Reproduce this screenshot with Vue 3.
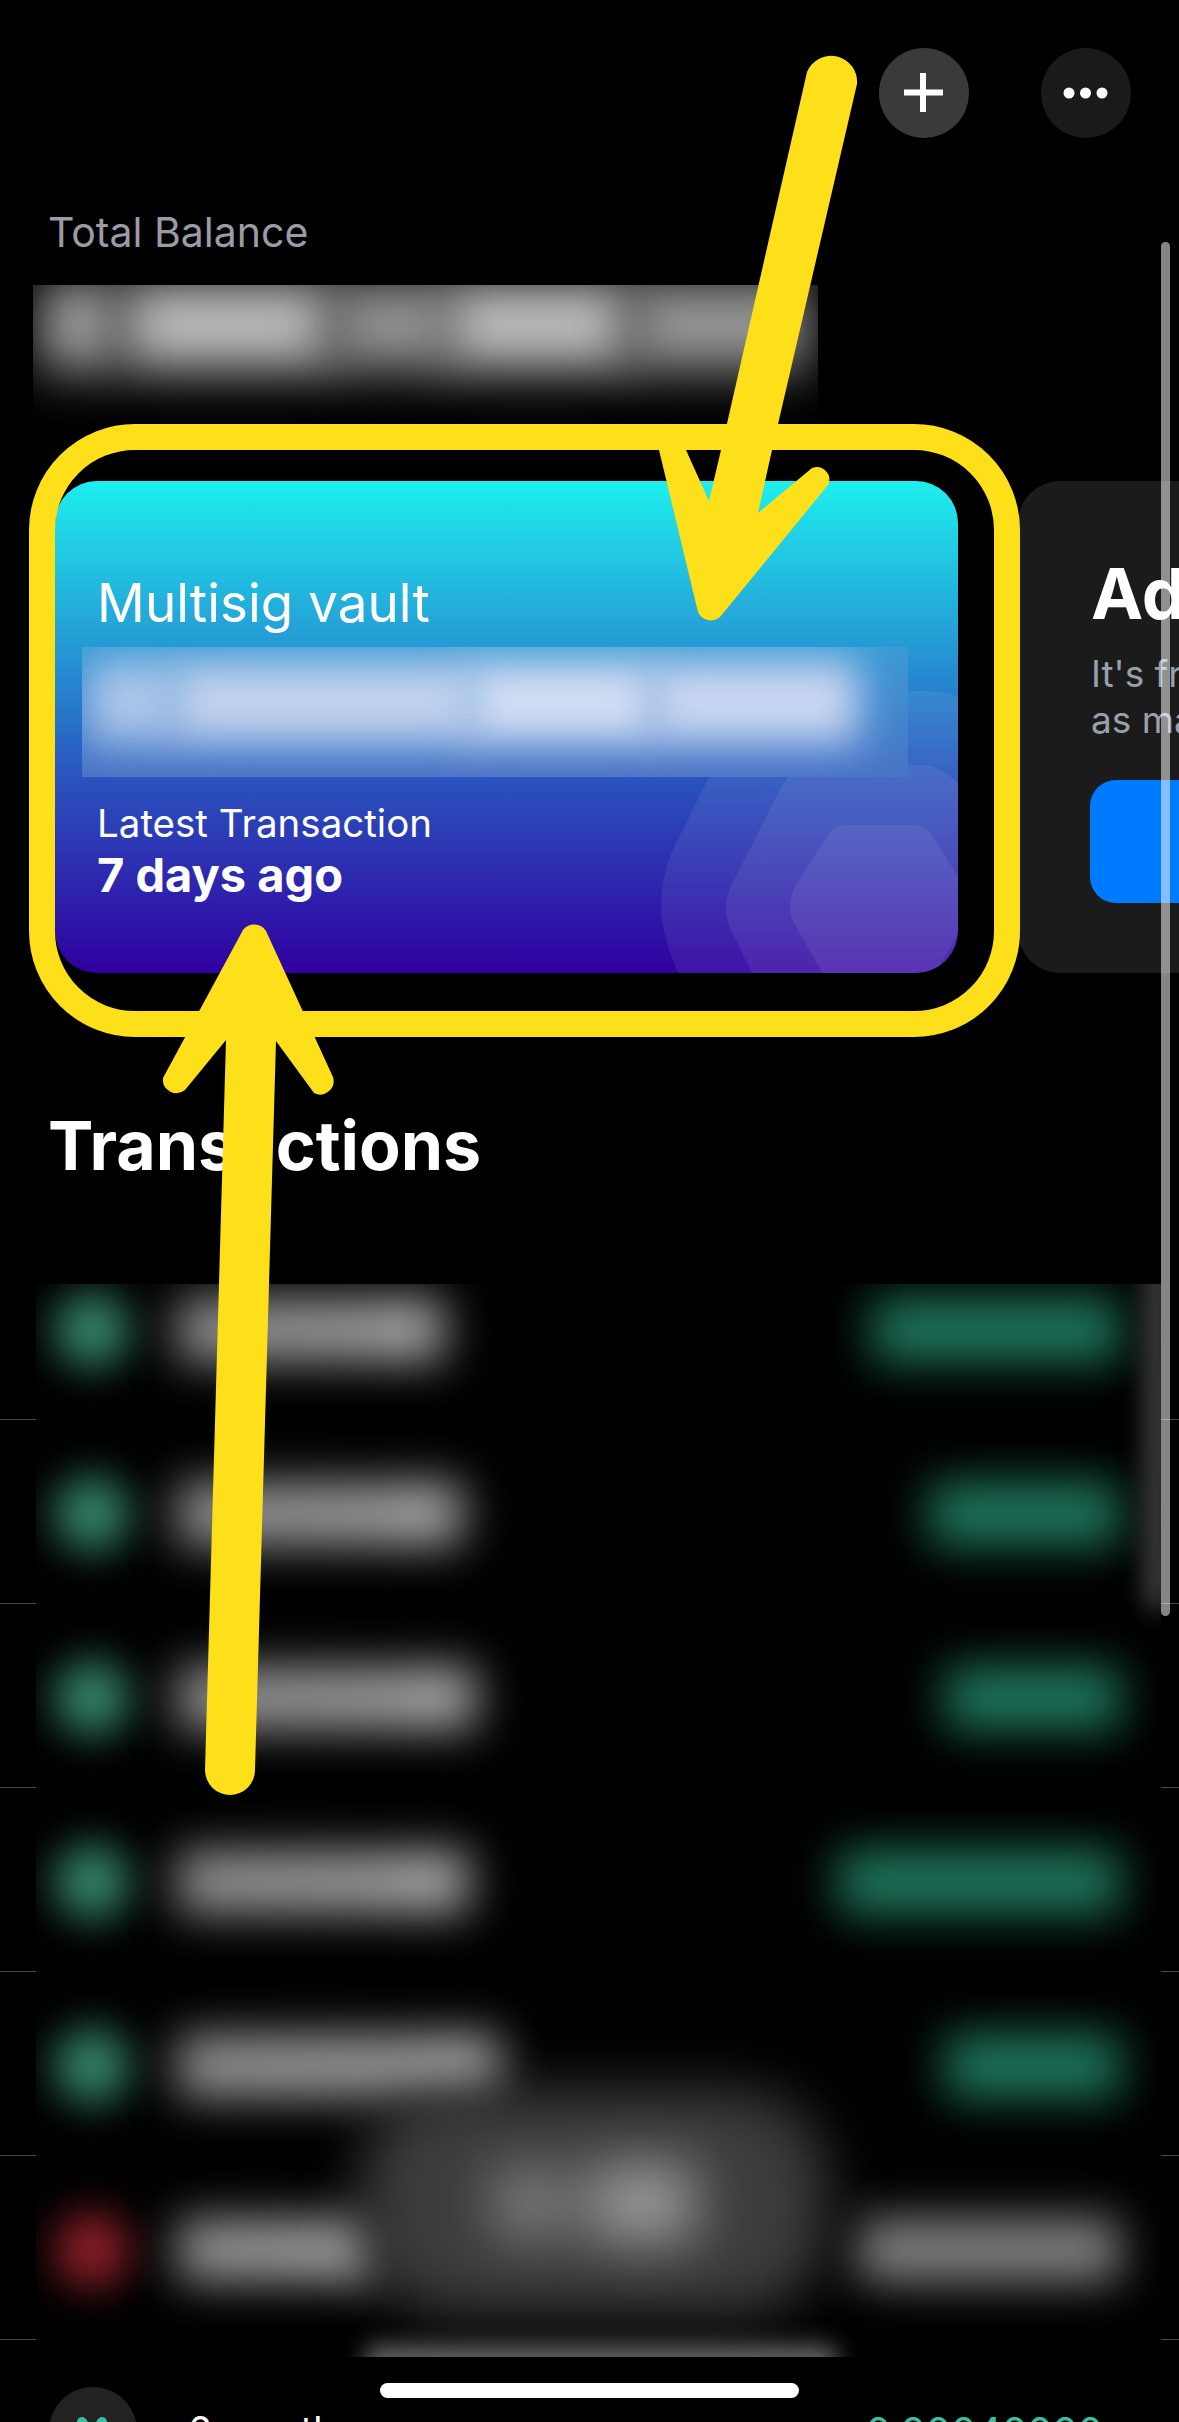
<template>
  <div class="page">
    <!-- top buttons -->
    <header class="topbar">
      <button class="round plus" aria-label="Add">
        <svg width="90" height="90" viewBox="0 0 90 90">
          <path d="M44 25v39M25 44.500h39" stroke="#fff" stroke-width="6" fill="none" />
        </svg>
      </button>
      <button class="round more" aria-label="More">
        <svg width="90" height="90" viewBox="0 0 90 90">
          <circle cx="28" cy="45" r="5.500" fill="#fff" />
          <circle cx="44.500" cy="45" r="5.500" fill="#fff" />
          <circle cx="61" cy="45" r="5.500" fill="#fff" />
        </svg>
      </button>
    </header>

    <div class="total-label">Total Balance</div>
    <div class="total-blur" aria-hidden="true">
      <span v-for="(s, i) in totalLumps" :key="i" class="lump" :style="lumpStyle(s)"></span>
    </div>

    <!-- wallet carousel -->
    <section class="carousel">
      <article class="vault">
        <svg class="hexes" viewBox="55 481 903 492" aria-hidden="true">
          <path d="M775 691L925 691Q945 691 965 700L1000 1000L690 1000Q661 940 661 907Q661 870 680 835L740 715Q752 691 775 691Z" />
          <path d="M812 765L925 765Q945 768 965 790L1000 1000L760 990L731 930Q720 908 732 884L780 790Q792 765 812 765Z" />
          <path d="M850 825L915 825Q928 825 938 845L968 893Q975 905 968 918L925 990L832 990L795 925Q785 907 795 887L826 838Q832 825 850 825Z" />
        </svg>
        <div class="vault-name">Multisig vault</div>
        <div class="vault-blur" aria-hidden="true">
          <span v-for="(s, i) in vaultLumps" :key="i" class="lump soft" :style="lumpStyle(s)"></span>
        </div>
        <div class="vault-latest">Latest Transaction</div>
        <div class="vault-when">7 days ago</div>
      </article>

      <article class="add-card">
        <div class="add-title">Add a wallet</div>
        <div class="add-desc">It's free and you can create<br />as many as you like.</div>
        <div class="add-btn"></div>
      </article>
    </section>

    <h2 class="tx-title">Transactions</h2>

    <!-- blurred list, the separators only show outside of the patch -->
    <section class="tx-wrap">
      <div class="tx-patch" aria-hidden="true">
        <div class="tx-rows">
          <div v-for="(r, i) in rows" :key="i" class="tx-row">
            <span class="tx-dot" :class="r.kind"></span>
            <span class="tx-text" :style="{ width: r.text + 'px' }"></span>
            <span class="tx-amount" :class="r.kind" :style="{ width: r.amount + 'px' }"></span>
          </div>
        </div>
        <div class="toast">
          <span class="toast-a"></span>
          <span class="toast-b"></span>
        </div>
        <div class="toast-edge"></div>
        <div class="bar-ghost"></div>
      </div>
    </section>

    <div class="last-row">
      <div class="last-icon">
        <svg width="88" height="88" viewBox="0 0 88 88">
          <path d="M33 35l10 16 10-16" stroke="#37c0a1" stroke-width="10" stroke-linecap="round" stroke-linejoin="round" fill="none" />
        </svg>
      </div>
      <div class="last-when">6 months ago</div>
      <div class="last-amount">0.00040000</div>
    </div>

    <div class="scrollbar"></div>
    <div class="home-bar"></div>

    <!-- yellow annotation drawn on top of the screenshot -->
    <svg class="marks" width="1179" height="2422" viewBox="0 0 1179 2422" aria-hidden="true">
      <rect x="42" y="437" width="965" height="587" rx="93" fill="none" stroke="#fde01a" stroke-width="26" />
      <path fill="#fde01a" d="M807 72A26 26 0 0 1 857 84L772 450L758 513L812 468A12.500 12.500 0 0 1 828 485L720 617A14 14 0 0 1 698 612L659 450L686 450L709 501L721 450Z" />
      <path fill="#fde01a" d="M243 930A14 14 0 0 1 266 931L333 1077A13.500 13.500 0 0 1 314 1093L276 1041L255 1770A25 25 0 0 1 205 1770L226 1040L185 1090A13.500 13.500 0 0 1 163 1078Z" />
    </svg>
  </div>
</template>

<script setup>
// blurred pieces of the balance amounts: [left, width, color]
const totalLumps = [
  [8, 74, '#a8a8a8'],
  [88, 215, '#bcbcbc'],
  [297, 120, '#949494'],
  [410, 190, '#bebebe'],
  [595, 180, '#989898']
]
const vaultLumps = [
  [6, 88, 'rgba(200,214,240,.8)'],
  [90, 304, 'rgba(205,216,240,.92)'],
  [386, 188, 'rgba(212,222,244,1)'],
  [568, 208, 'rgba(208,218,242,.96)']
]

const rows = [
  { kind: 'in', text: 268, amount: 248 },
  { kind: 'in', text: 286, amount: 191 },
  { kind: 'in', text: 300, amount: 175 },
  { kind: 'in', text: 293, amount: 282 },
  { kind: 'in', text: 324, amount: 175 },
  { kind: 'out', text: 202, amount: 263 }
]

function lumpStyle(s) {
  return { left: s[0] + 'px', width: s[1] + 'px', background: s[2] }
}
</script>

<style scoped>
.page {
  position: relative;
  width: 1179px;
  height: 2422px;
  overflow: hidden;
  background: #000;
  color: #fff;
  font-family: Inter, "Liberation Sans", sans-serif;
}

.topbar {
  display: flex;
  justify-content: flex-end;
  gap: 72px;
  padding: 48px 48px 0 0;
}
.round {
  width: 90px;
  height: 90px;
  padding: 0;
  border: 0;
  border-radius: 50%;
}
.round svg {
  display: block;
}
.plus {
  background: #3a3a3c;
}
.more {
  background: #1a1a1a;
}

.total-label {
  margin: 69px 0 0 48px;
  font-size: 41px;
  line-height: 50px;
  color: #9a9ca5;
}
.total-blur {
  position: relative;
  width: 785px;
  height: 144px;
  margin: 28px 0 0 33px;
  overflow: hidden;
  background: #000;
}
.lump {
  position: absolute;
  top: -5px;
  height: 90px;
  filter: blur(26px);
}

.carousel {
  display: flex;
  gap: 60px;
  width: 2200px;
  margin: 52px 0 0 55px;
}
.vault {
  position: relative;
  flex: none;
  width: 903px;
  height: 492px;
  box-sizing: border-box;
  padding: 90px 0 0 42px;
  overflow: hidden;
  border-radius: 42px;
  background: linear-gradient(180deg, #1eeeee 0%, #2596d4 35%, #2a54be 60%, #3000a0 100%);
}
.hexes {
  position: absolute;
  left: 0;
  top: 0;
  width: 903px;
  height: 492px;
}
.hexes path {
  fill: rgba(255, 255, 255, 0.075);
}
.vault-name {
  position: relative;
  font-size: 53px;
  line-height: 64px;
}
.vault-blur {
  position: relative;
  width: 826px;
  height: 130px;
  margin: 12px 0 0 -15px;
  overflow: hidden;
  background: linear-gradient(180deg, #3a9bd6, #4a72c6);
}
.vault-blur .soft {
  top: 14px;
  height: 82px;
  filter: blur(20px);
}
.vault-latest {
  position: relative;
  margin-top: 22px;
  font-size: 38.500px;
  line-height: 48px;
}
.vault-when {
  position: relative;
  margin-top: 0;
  font-size: 47px;
  line-height: 56px;
  font-weight: 700;
}

.add-card {
  flex: none;
  width: 903px;
  height: 492px;
  box-sizing: border-box;
  padding: 77px 0 0 73px;
  border-radius: 42px;
  background: #1b1b1b;
}
.add-title {
  font-size: 70px;
  line-height: 72px;
  font-weight: 700;
}
.add-desc {
  margin-top: 21px;
  font-size: 37px;
  line-height: 46px;
  color: #9aa0ab;
}
.add-btn {
  width: 700px;
  height: 123px;
  margin: 37px 0 0 -1px;
  border-radius: 26px;
  background: #007aff;
}

.tx-title {
  margin: 132px 0 0 48px;
  font-size: 68px;
  line-height: 80px;
  font-weight: 700;
}

.tx-wrap {
  margin-top: 99px;
  height: 1073px;
  background-image: linear-gradient(to bottom, transparent 183px, #48484a 183px);
  background-size: 100% 184px;
  background-position: 0 -48px;
}
.tx-patch {
  position: relative;
  height: 100%;
  margin: 0 18px 0 36px;
  overflow: hidden;
  background: #000;
}
.tx-rows {
  margin-top: -46px;
}
.tx-row {
  display: flex;
  align-items: center;
  height: 184px;
}
.tx-dot {
  flex: none;
  width: 76px;
  height: 76px;
  margin-left: 18px;
  border-radius: 50%;
  filter: blur(20px);
}
.tx-dot.in {
  background: #34836b;
}
.tx-dot.out {
  background: #8a1e27;
}
.tx-text {
  flex: none;
  height: 64px;
  margin-left: 47px;
  background: linear-gradient(90deg, #8e8e8e, #989898 70%, #a6a6a6 85%, #9c9c9c);
  filter: blur(23px);
}
.tx-amount {
  height: 64px;
  margin-left: auto;
  margin-right: 41px;
  filter: blur(23px);
}
.tx-amount.in {
  background: #1e765c;
}
.tx-amount.out {
  background: #808080;
}

.toast {
  position: absolute;
  left: 325px;
  top: 806px;
  display: flex;
  gap: 22px;
  align-items: center;
  justify-content: center;
  width: 466px;
  height: 225px;
  border-radius: 90px;
  background: #3c3c3e;
  filter: blur(28px);
}
.toast-a {
  width: 74px;
  height: 72px;
  background: #7e7e7e;
}
.toast-b {
  width: 106px;
  height: 80px;
  background: #999;
}
.toast-edge {
  position: absolute;
  left: 330px;
  top: 1062px;
  width: 470px;
  height: 50px;
  background: #6a6a6a;
  filter: blur(12px);
}
.bar-ghost {
  position: absolute;
  right: -8px;
  top: -20px;
  width: 24px;
  height: 345px;
  background: #444;
  filter: blur(12px);
}

.last-row {
  display: flex;
  align-items: flex-start;
  padding: 30px 76px 0 49px;
}
.last-icon {
  flex: none;
  width: 88px;
  height: 88px;
  border-radius: 50%;
  background: #222;
}
.last-icon svg {
  display: block;
}
.last-when {
  margin: 20px 0 0 51px;
  font-size: 38px;
  line-height: 46px;
}
.last-amount {
  margin: 22px 0 0 auto;
  font-size: 40px;
  line-height: 46px;
  color: #37c0a1;
}

.scrollbar {
  position: absolute;
  left: 1161px;
  top: 242px;
  width: 9px;
  height: 1374px;
  border-radius: 5px;
  background: rgba(255, 255, 255, 0.52);
}
.home-bar {
  position: absolute;
  left: 380px;
  top: 2383px;
  width: 419px;
  height: 15px;
  border-radius: 8px;
  background: #fff;
}
.marks {
  position: absolute;
  left: 0;
  top: 0;
}
</style>

<style>
html,
body {
  margin: 0;
  background: #000;
}
</style>
